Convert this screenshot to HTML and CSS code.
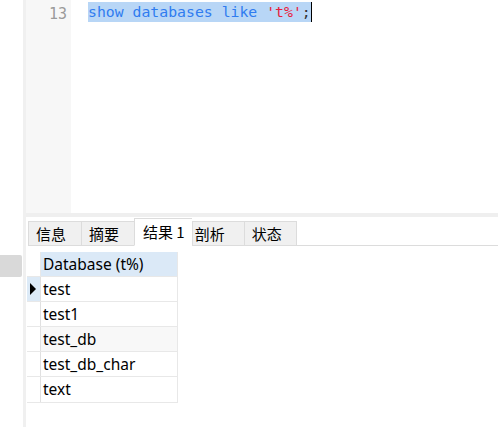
FILE: index.html
```html
<!DOCTYPE html>
<html lang="zh">
<head>
<meta charset="utf-8">
<link rel="stylesheet" href="styles.css">
</head>
<body>
<div class="app">
  <aside class="sidebar">
    <div class="side-item"></div>
  </aside>
  <div class="stripe"></div>
  <main class="main">
    <section class="editor">
      <div class="gutter"><span class="lineno">13</span></div>
      <div class="code">
        <span class="sel"><span class="kw">show databases like </span><span class="str">'t%'</span><span class="punc">;</span></span><span class="caret"></span>
      </div>
    </section>
    <div class="splitter"></div>
    <nav class="tabs">
      <div class="tab">信息</div>
      <div class="tab">摘要</div>
      <div class="tab active">结果 1</div>
      <div class="tab">剖析</div>
      <div class="tab">状态</div>
      <div class="tab-fill"></div>
    </nav>
    <div class="grid">
      <div class="row head">
        <div class="ind"></div>
        <div class="cell">Database (t%)</div>
      </div>
      <div class="row">
        <div class="ind current"><span class="arrow"></span></div>
        <div class="cell">test</div>
      </div>
      <div class="row">
        <div class="ind"></div>
        <div class="cell">test1</div>
      </div>
      <div class="row alt">
        <div class="ind"></div>
        <div class="cell">test_db</div>
      </div>
      <div class="row">
        <div class="ind"></div>
        <div class="cell">test_db_char</div>
      </div>
      <div class="row">
        <div class="ind"></div>
        <div class="cell">text</div>
      </div>
    </div>
  </main>
</div>
</body>
</html>
```
FILE: styles.css
```css
html, body {
  margin: 0;
  padding: 0;
  background: #ffffff;
}
body {
  width: 498px;
  height: 427px;
  overflow: hidden;
  font-family: "Noto Sans", "Noto Sans CJK SC", sans-serif;
  font-size: 15px;
  color: #000;
}
.app {
  display: flex;
  height: 427px;
}
.sidebar {
  width: 23px;
  flex: none;
  padding-top: 255px;
  box-sizing: border-box;
}
.side-item {
  width: 22px;
  height: 22px;
  background: #d9d9d9;
  border-radius: 0 2px 2px 0;
}
.stripe {
  width: 3px;
  flex: none;
  background: #f0f0f0;
}
.main {
  flex: 1;
  display: flex;
  flex-direction: column;
  min-width: 0;
}
.editor {
  height: 213px;
  display: flex;
  flex: none;
}
.gutter {
  width: 45px;
  flex: none;
  background: #f7f7f7;
  box-sizing: border-box;
  padding: 3px 4px 0 0;
  text-align: right;
}
.lineno {
  font-family: "DejaVu Sans Mono", monospace;
  font-size: 15px;
  line-height: 20px;
  color: #9a9a9a;
}
.code {
  padding: 2px 0 0 17px;
  font-family: "DejaVu Sans Mono", monospace;
  font-size: 14.8px;
  line-height: 20px;
  white-space: pre;
  display: flex;
  align-items: flex-start;
}
.sel {
  background: #b8d6f6;
  display: inline-block;
  height: 20px;
}
.kw { color: #2f7cf0; }
.str { color: #e8203c; }
.punc { color: #333; }
.caret {
  display: inline-block;
  width: 1px;
  height: 20px;
  background: #000;
}
.splitter {
  height: 4px;
  flex: none;
  background: #efefef;
}
.tabs {
  display: flex;
  align-items: flex-end;
  height: 29px;
  flex: none;
  padding-left: 2px;
  box-sizing: border-box;
  font-family: "Noto Sans CJK SC", sans-serif;
  font-size: 15px;
}
.tab {
  height: 25px;
  box-sizing: border-box;
  border: 1px solid #dcdcdc;
  border-right: none;
  background: #f0f0f0;
  padding: 0 7px;
  line-height: 23px;
  color: #000;
  min-width: 53px;
}
.tab:nth-child(4) { padding: 0 2px; min-width: 52px; }
.tab:nth-child(5) { border-right: 1px solid #dcdcdc; }
.tab.active {
  height: 28px;
  background: #ffffff;
  border-bottom-color: #ffffff;
  padding: 0 7px 0 8px;
  line-height: 26px;
  min-width: 57px;
}
.tab-fill {
  flex: 1;
  height: 1px;
  background: #dcdcdc;
}
.tab:not(.active) {
  border-bottom: 1px solid #dcdcdc;
}
.grid {
  margin-top: 6px;
  margin-left: 1px;
  width: 151px;
  border-bottom: 1px solid #e8e8e8;
  font-size: 15.5px;
}
.row {
  display: flex;
  height: 25px;
  box-sizing: border-box;
  border-bottom: 1px solid #e8e8e8;
}
.row:last-child { border-bottom: none; }
.ind {
  width: 13px;
  flex: none;
  border-right: 1px solid #e0e0e0;
  display: flex;
  align-items: center;
  justify-content: flex-start;
}
.ind.current { background: #dceaf7; }
.arrow {
  width: 0;
  height: 0;
  margin-left: 3px;
  border-left: 6px solid #000;
  border-top: 6px solid transparent;
  border-bottom: 6px solid transparent;
}
.cell {
  flex: 1;
  padding-left: 2px;
  line-height: 24px;
  white-space: nowrap;
  border-right: 1px solid #e8e8e8;
}
.head .cell { background: #dbe9f7; }
.head .ind { border-right-color: #e8e8e8; }
.alt .cell { background: #f8f8f8; }
```
